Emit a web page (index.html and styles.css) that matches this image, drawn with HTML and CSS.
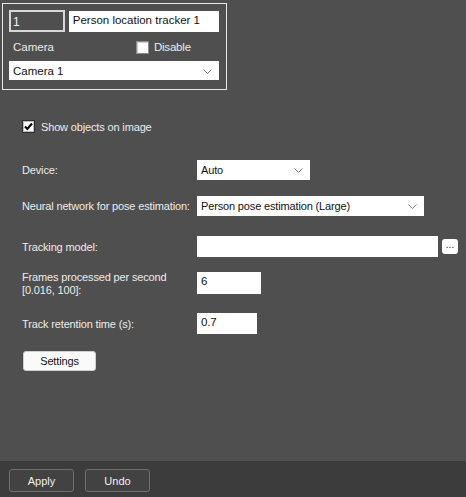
FILE: index.html
```html
<!DOCTYPE html>
<html>
<head>
<meta charset="utf-8">
<link rel="stylesheet" href="styles.css">
</head>
<body>
<div class="page">
  <div class="main">
    <div class="frame">
      <div class="frame-row">
        <div class="id-field">1</div>
        <div class="name-field">Person location tracker 1</div>
      </div>
      <div class="frame-row cam-row">
        <span class="cam-label">Camera</span>
        <span class="chk-wrap disable"><span class="chk"></span><span>Disable</span></span>
      </div>
      <div class="combo cam-combo"><span>Camera 1</span><svg class="arrow" width="9" height="5" viewBox="0 0 9 5"><path d="M0.5 0.5 L4.5 4.5 L8.5 0.5" fill="none" stroke="#7a7a7a" stroke-width="1"/></svg></div>
    </div>

    <div class="settings">
      <div class="row show-row">
        <span class="chk checked"><svg width="11" height="11" viewBox="0 0 11 11"><path d="M2 5.5 L4.3 8 L9 2.5" fill="none" stroke="#000" stroke-width="2"/></svg></span>
        <span class="show-label">Show objects on image</span>
      </div>

      <div class="row device-row">
        <span class="label">Device:</span>
        <div class="combo small device-combo"><span>Auto</span><svg class="arrow" width="9" height="5" viewBox="0 0 9 5"><path d="M0.5 0.5 L4.5 4.5 L8.5 0.5" fill="none" stroke="#7a7a7a" stroke-width="1"/></svg></div>
      </div>

      <div class="row nn-row">
        <span class="label">Neural network for pose estimation:</span>
        <div class="combo small nn-combo"><span>Person pose estimation (Large)</span><svg class="arrow" width="9" height="5" viewBox="0 0 9 5"><path d="M0.5 0.5 L4.5 4.5 L8.5 0.5" fill="none" stroke="#7a7a7a" stroke-width="1"/></svg></div>
      </div>

      <div class="row track-row">
        <span class="label">Tracking model:</span>
        <div class="input track-input"></div>
        <div class="dots">...</div>
      </div>

      <div class="row frames-row">
        <span class="label two-line">Frames processed per second<br>[0.016, 100]:</span>
        <div class="input frames-input">6</div>
      </div>

      <div class="row retention-row">
        <span class="label">Track retention time (s):</span>
        <div class="input retention-input">0.7</div>
      </div>

      <div class="row settings-row">
        <div class="btn-light">Settings</div>
      </div>
    </div>
  </div>

  <div class="footer">
    <div class="btn-dark">Apply</div>
    <div class="btn-dark">Undo</div>
  </div>
</div>
</body>
</html>
```

FILE: styles.css
```css
* { box-sizing: border-box; }
html, body {
  margin: 0;
  padding: 0;
  width: 466px;
  height: 497px;
  overflow: hidden;
  background: #4f4f4f;
}
body {
  font-family: "Liberation Sans", Arial, sans-serif;
  font-size: 11px;
  color: #ececec;
}
.page {
  display: flex;
  flex-direction: column;
  height: 497px;
}
.main {
  flex: 1;
  padding-top: 3px;
}
.frame {
  margin-left: 2px;
  width: 225px;
  height: 87px;
  border: 1px solid #e9e9e9;
  padding: 6px 7px 0 6px;
}
.frame-row {
  display: flex;
  align-items: center;
}
.id-field {
  width: 56px;
  height: 22px;
  border: 2px solid #d8d8d8;
  background: #4f4f4f;
  color: #f2f2f2;
  font-size: 12px;
  padding: 3px 0 0 2px;
}
.name-field {
  margin-left: 4px;
  width: 151px;
  height: 21px;
  background: #fff;
  color: #111;
  font-size: 11.5px;
  padding: 3px 0 0 4px;
}
.cam-row {
  height: 29px;
  padding-top: 1px;
}
.cam-label {
  margin-left: 4px;
  font-size: 11.5px;
}
.chk-wrap {
  display: flex;
  align-items: center;
  gap: 5px;
  margin-left: 82px;
  font-size: 11.5px;
  letter-spacing: -0.2px;
}
.chk {
  width: 13px;
  height: 13px;
  background: #fff;
  border: 1px solid #8d8d8d;
  display: inline-flex;
  align-items: center;
  justify-content: center;
}
.disable .chk {
  box-shadow: inset 1px 1px 0 #cfcfcf;
}
.combo {
  position: relative;
  background: #fff;
  color: #111;
  display: flex;
  align-items: center;
  padding-left: 4px;
  font-size: 11.5px;
}
.combo.small {
  font-size: 11px;
  letter-spacing: -0.15px;
}
.combo .arrow {
  position: absolute;
  right: 7px;
  top: 8px;
}
.cam-combo {
  width: 210px;
  height: 19px;
}
.settings {
  padding-left: 22px;
  letter-spacing: -0.15px;
}
.row {
  display: flex;
  align-items: center;
}
.label {
  width: 175px;
  flex: none;
}
.show-row {
  margin-top: 30px;
  height: 13px;
}
.chk.checked {
  border: 1px solid #2f2f2f;
  box-shadow: inset 0 0 0 1px #bdbdbd;
}
.show-label {
  margin-left: 6px;
}
.device-row {
  margin-top: 27px;
  height: 20px;
}
.device-combo {
  width: 113px;
  height: 20px;
}
.nn-row {
  margin-top: 16px;
  height: 20px;
}
.nn-combo {
  width: 227px;
  height: 20px;
}
.track-row {
  margin-top: 20px;
  height: 21px;
}
.input {
  background: #fff;
  color: #111;
  font-size: 11.5px;
  padding: 3px 0 0 4px;
}
.track-input {
  width: 241px;
  height: 21px;
}
.dots {
  margin-left: 4px;
  width: 16px;
  height: 15px;
  background: #fff;
  border-radius: 3px;
  color: #222;
  font-size: 10px;
  line-height: 12px;
  text-align: center;
  letter-spacing: 0;
}
.frames-row {
  margin-top: 15px;
  height: 22px;
}
.two-line {
  line-height: 13px;
  margin-top: 1px;
}
.frames-input {
  width: 64px;
  height: 22px;
}
.retention-row {
  margin-top: 19px;
  height: 21px;
}
.retention-input {
  width: 60px;
  height: 21px;
}
.settings-row {
  margin-top: 17px;
  height: 20px;
  padding-left: 1px;
}
.btn-light {
  width: 73px;
  height: 20px;
  background: #fafafa;
  border: 1px solid #cfcfcf;
  border-radius: 3px;
  color: #111;
  display: flex;
  align-items: center;
  justify-content: center;
}
.footer {
  height: 36px;
  background: #3c3c3c;
  display: flex;
  align-items: flex-start;
  gap: 11px;
  padding: 8px 0 0 9px;
}
.btn-dark {
  width: 65px;
  height: 23px;
  border: 1px solid #6f6f6f;
  border-radius: 3px;
  background: #424242;
  color: #f0f0f0;
  display: flex;
  align-items: center;
  justify-content: center;
}
```
